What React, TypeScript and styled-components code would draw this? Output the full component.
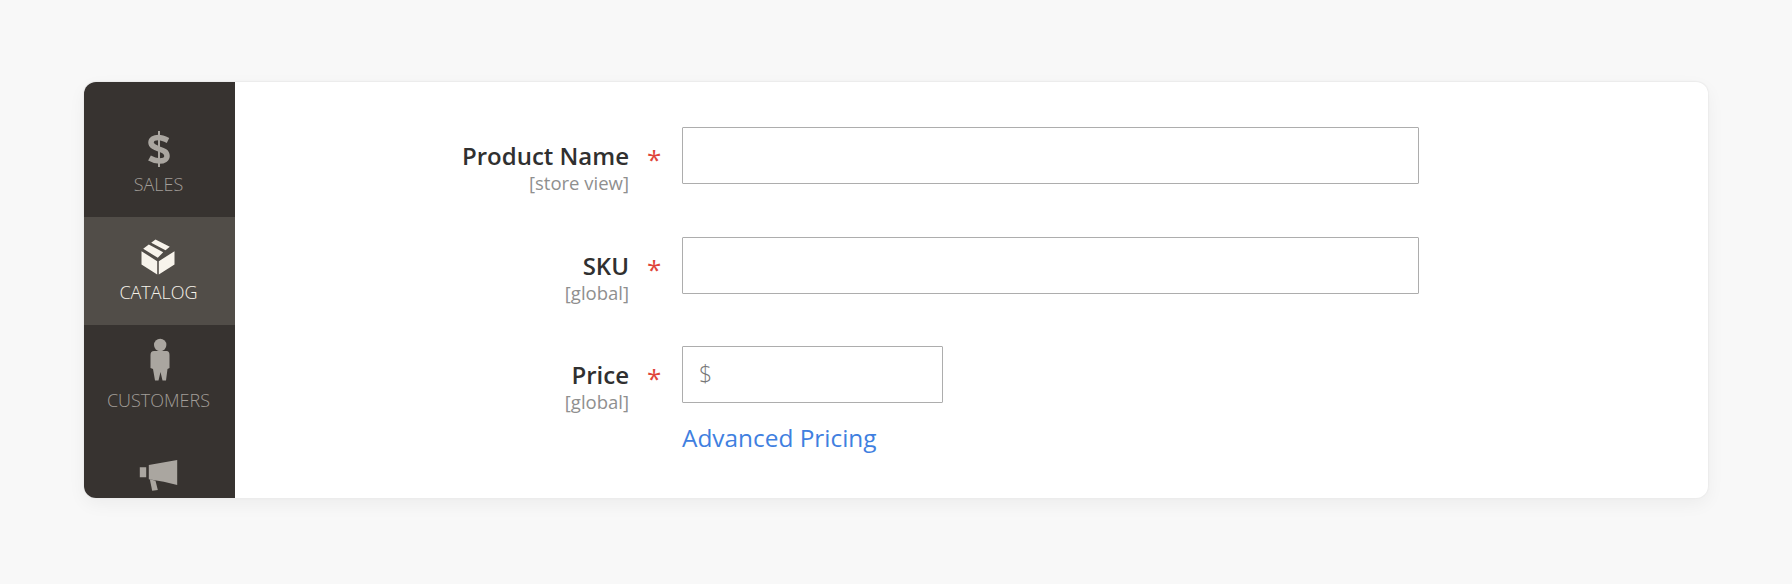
import React from "react";
import styled, { createGlobalStyle } from "styled-components";

const GlobalStyle = createGlobalStyle`
  html, body { margin: 0; padding: 0; background: #f8f8f8; }
  body { font-family: "Open Sans", "Noto Sans", sans-serif; }
`;

const Page = styled.div`
  width: 1792px;
  height: 584px;
  box-sizing: border-box;
  padding: 82px 84px 86px;
  overflow: hidden;
`;

const Card = styled.div`
  display: flex;
  width: 1624px;
  height: 416px;
  background: #fff;
  border-radius: 12px;
  overflow: hidden;
  box-shadow: 0 0 1px 1px #ececec, 0 6px 18px rgba(0, 0, 0, 0.05);
`;

const Sidebar = styled.nav`
  width: 151px;
  flex: none;
  box-sizing: border-box;
  padding-top: 27px;
  background: #373330;
  overflow: hidden;
`;

const NavItem = styled.a<{ $active?: boolean }>`
  display: flex;
  flex-direction: column;
  align-items: center;
  height: 108px;
  box-sizing: border-box;
  padding: 17px 2px 0 0;
  background: ${(p) => (p.$active ? "#514d48" : "transparent")};
  color: ${(p) => (p.$active ? "#f7f3eb" : "#aaa6a0")};
`;

const NavIcon = styled.svg`
  width: 44px;
  height: 46px;
  flex: none;
  fill: currentColor;
  overflow: visible;
`;

const NavLabel = styled.span<{ $active?: boolean }>`
  font-size: 18px;
  font-weight: 300;
  line-height: 24px;
  color: ${(p) => (p.$active ? "#f7f3eb" : "#a29e99")};
`;

const Form = styled.div`
  flex: 1;
  display: flex;
  flex-direction: column;
  gap: 52.5px;
  padding-top: 45px;
`;

const Row = styled.div`
  display: grid;
  grid-template-columns: 394px 53px 1fr;
  height: 57px;
`;

const LabelBox = styled.div`
  display: flex;
  flex-direction: column;
  align-items: flex-end;
  padding-top: 17px;
`;

const LabelText = styled.label`
  font-size: 24px;
  font-weight: 600;
  line-height: 24px;
  color: #303030;
`;

const Scope = styled.span`
  margin-top: 6px;
  font-size: 18.5px;
  line-height: 18px;
  color: #8f8f8f;
`;

const Star = styled.span`
  padding: 14px 0 0 18px;
  font-size: 26px;
  line-height: 36px;
  color: #e0443a;
`;

const FieldColumn = styled.div`
  display: flex;
  flex-direction: column;
  align-items: flex-start;
`;

const InputBox = styled.div<{ $narrow?: boolean }>`
  display: flex;
  align-items: center;
  flex: none;
  width: ${(p) => (p.$narrow ? "261px" : "737px")};
  height: 57px;
  box-sizing: border-box;
  padding: 0 16px;
  background: #fff;
  border: 1.5px solid #adadad;
  border-radius: 1px;
`;

const Addon = styled.span`
  margin-top: -4px;
  font-size: 23px;
  font-weight: 300;
  color: #777777;
`;

const TextField = styled.input`
  flex: 1;
  min-width: 0;
  border: 0;
  outline: 0;
  background: transparent;
`;

const FieldLink = styled.a`
  margin-top: 20px;
  font-size: 24.4px;
  line-height: 30px;
  white-space: nowrap;
  color: #3f80e0;
`;

const DollarIcon = () => (
  <NavIcon viewBox="0 0 44 46">
    <path
      d="M31 14.500C27 12.500 24 11.500 21.500 11.500C17 11.500 14 13.500 14 16.500C14 20 18 21.500 22 23C26.500 24.500 30 26 30 30C30 33 27 35 22.500 35C19 35 16 34 12.500 32"
      fill="none"
      stroke="currentColor"
      strokeWidth="5.5"
    />
    <rect x="21" y="5" width="2" height="36" />
  </NavIcon>
);

const BoxIcon = () => (
  <NavIcon viewBox="0 0 44 46">
    <path d="M18.500 5.500 32.800 12.800 28.500 16.200 14.200 8.800zM11.800 10.500 26.200 18.200 20.800 23.800 6.200 14.800z" />
    <path d="M4.500 17.200 20.200 27.200V40.500L4.500 30.500zM21.800 27.200 37.500 17.200V30.500L21.800 40.500z" />
  </NavIcon>
);

const PersonIcon = () => (
  <NavIcon viewBox="0 0 44 46">
    <circle cx="23.200" cy="3" r="6.200" />
    <path d="M17 9H29.500Q32.500 9 32.500 13V26L30.500 27 29 38.500H25.500L23.500 30 21.500 38.500H18L16 27 13.500 26V13Q13.500 9 17 9z" />
  </NavIcon>
);

const MegaphoneIcon = () => (
  <NavIcon viewBox="0 0 44 46">
    <path d="M2.800 17.300H9.200V27.300H2.800zM11.800 15 40.200 10V35L26.800 31.700 11.800 29.300z" />
    <path d="M12.800 29.300 18.500 30.700 20.800 40 15.200 40.700z" />
  </NavIcon>
);

const fields = [
  { label: "Product Name", scope: "[store view]" },
  { label: "SKU", scope: "[global]" },
];

export default function App() {
  return (
    <Page>
      <GlobalStyle />
      <Card>
        <Sidebar>
          <NavItem>
            <DollarIcon />
            <NavLabel>SALES</NavLabel>
          </NavItem>
          <NavItem $active>
            <BoxIcon />
            <NavLabel $active>CATALOG</NavLabel>
          </NavItem>
          <NavItem>
            <PersonIcon />
            <NavLabel>CUSTOMERS</NavLabel>
          </NavItem>
          <NavItem>
            <MegaphoneIcon />
          </NavItem>
        </Sidebar>
        <Form>
          {fields.map((f) => (
            <Row key={f.label}>
              <LabelBox>
                <LabelText>{f.label}</LabelText>
                <Scope>{f.scope}</Scope>
              </LabelBox>
              <Star>*</Star>
              <FieldColumn>
                <InputBox>
                  <TextField />
                </InputBox>
              </FieldColumn>
            </Row>
          ))}
          <Row>
            <LabelBox>
              <LabelText>Price</LabelText>
              <Scope>[global]</Scope>
            </LabelBox>
            <Star>*</Star>
            <FieldColumn>
              <InputBox $narrow>
                <Addon>$</Addon>
                <TextField />
              </InputBox>
              <FieldLink>Advanced Pricing</FieldLink>
            </FieldColumn>
          </Row>
        </Form>
      </Card>
    </Page>
  );
}
